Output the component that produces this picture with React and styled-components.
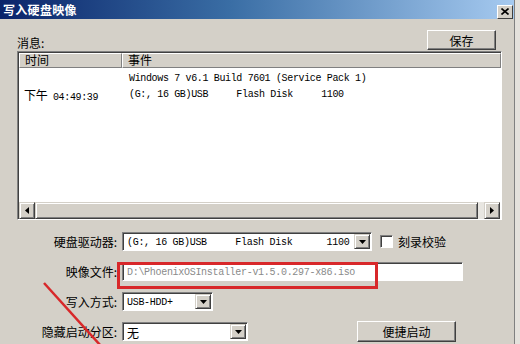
import styled, { createGlobalStyle } from "styled-components";

const GlobalStyle = createGlobalStyle`
  html, body { margin: 0; padding: 0; background: #e4e1dc; }
  body {
    width: 520px;
    height: 344px;
    overflow: hidden;
    font-family: "Noto Sans CJK SC", "DejaVu Sans", sans-serif;
    font-size: 12px;
    color: #000;
  }
`;

const mono = `"Liberation Mono", "Noto Sans CJK SC", monospace`;

const Window = styled.div`
  position: relative;
  width: 515px;
  height: 344px;
  background: #d4d0c8;
  border-right: 1px solid #808080;
  box-sizing: border-box;
  overflow: hidden;
`;

const TitleBar = styled.div`
  height: 19px;
  display: flex;
  align-items: center;
  justify-content: space-between;
  padding: 0 1px 0 3px;
  background: linear-gradient(90deg, #0a246a 0%, #3a6ea5 45%, #a6caf0 100%);
  color: #fff;
  font-weight: bold;
  font-size: 12px;
  letter-spacing: 0.3px;
`;

const CloseBtn = styled.div`
  width: 14px;
  height: 12px;
  background: #d4d0c8;
  border: 1px solid;
  border-color: #fff #404040 #404040 #fff;
  display: flex;
  align-items: center;
  justify-content: center;
  margin-top: 4px;
`;

const Body = styled.div`
  padding: 10px 12px 0 17px;
`;

const TopRow = styled.div`
  display: flex;
  justify-content: space-between;
  align-items: flex-end;
  padding-right: 6px;
  height: 21px;
`;

const Label = styled.span`
  font-size: 12px;
  line-height: 14px;
`;

const Button = styled.div`
  width: ${(p) => p.$w}px;
  height: ${(p) => p.$h || 20}px;
  box-sizing: border-box;
  border: 1px solid;
  border-color: #fff #404040 #404040 #fff;
  box-shadow: inset -1px -1px #808080;
  display: flex;
  align-items: center;
  justify-content: center;
  font-size: 12px;
  margin-left: ${(p) => p.$ml || 0}px;
`;

const ListBox = styled.div`
  margin-top: 1px;
  width: 485px;
  height: 169px;
  box-sizing: border-box;
  border: 1px solid;
  border-color: #808080 #fff #fff #808080;
  box-shadow: inset 1px 1px #404040;
  background: #fff;
  display: flex;
  flex-direction: column;
  padding: 1px 0 0 1px;
`;

const HeaderRow = styled.div`
  display: flex;
  height: 15px;
`;

const HeaderCell = styled.div`
  width: ${(p) => (p.$w ? `${p.$w}px` : "auto")};
  flex: ${(p) => (p.$w ? "none" : 1)};
  box-sizing: border-box;
  background: #d4d0c8;
  border: 1px solid;
  border-color: #fff #808080 #808080 #fff;
  padding-left: 5px;
  font-size: 12px;
  line-height: 12px;
`;

const Rows = styled.div`
  flex: 1;
  padding-top: 2px;
`;

const Row = styled.div`
  display: flex;
  height: 16px;
  align-items: center;
  font-family: ${mono};
  font-size: 10px;
  letter-spacing: -0.35px;
  white-space: pre;
`;

const TimeCell = styled.div`
  width: 104px;
  padding-left: 5px;
  box-sizing: border-box;
  font-family: ${mono};
  span { font-family: "Noto Sans CJK SC", sans-serif; font-size: 12px; }
`;

const EventCell = styled.div`
  padding-left: 6px;
`;

const HScroll = styled.div`
  height: 17px;
  display: flex;
  background: #e8e6e1;
  margin-right: 1px;
`;

const ScrollBtn = styled.div`
  width: 16px;
  height: 17px;
  box-sizing: border-box;
  background: #d4d0c8;
  border: 1px solid;
  border-color: #d4d0c8 #404040 #404040 #d4d0c8;
  box-shadow: inset 1px 1px #fff, inset -1px -1px #808080;
  display: flex;
  align-items: center;
  justify-content: center;
`;

const Thumb = styled.div`
  flex: 1;
  margin-right: 6px;
  box-sizing: border-box;
  background: #d4d0c8;
  border: 1px solid;
  border-color: #d4d0c8 #404040 #404040 #d4d0c8;
  box-shadow: inset 1px 1px #fff, inset -1px -1px #808080;
`;

const Form = styled.div`
  display: grid;
  grid-template-columns: 100px auto;
  column-gap: 5px;
  row-gap: 11px;
  margin-top: 12px;
  align-items: center;
`;

const FieldLabel = styled.div`
  text-align: right;
  font-size: 12px;
  line-height: 19px;
`;

const FieldRow = styled.div`
  display: flex;
  align-items: center;
  height: 19px;
`;

const Sunken = styled.div`
  width: ${(p) => p.$w}px;
  height: 19px;
  box-sizing: border-box;
  border: 1px solid;
  border-color: #808080 #fff #fff #808080;
  box-shadow: inset 1px 1px #404040;
  background: #fff;
  display: flex;
  align-items: center;
  padding: 1px 1px 0 4px;
  font-family: ${mono};
  font-size: 10px;
  letter-spacing: -0.3px;
  color: ${(p) => (p.$dim ? "#8a8a8a" : "#000")};
  white-space: pre;
`;

const SelectText = styled.div`
  flex: 1;
  overflow: hidden;
  font-family: ${(p) => (p.$cjk ? `"Noto Sans CJK SC", sans-serif` : mono)};
  font-size: ${(p) => (p.$cjk ? 12 : 10)}px;
`;

const DropBtn = styled.div`
  width: 16px;
  height: 15px;
  box-sizing: border-box;
  background: #d4d0c8;
  border: 1px solid;
  border-color: #d4d0c8 #404040 #404040 #d4d0c8;
  box-shadow: inset 1px 1px #fff, inset -1px -1px #808080;
  display: flex;
  align-items: center;
  justify-content: center;
  margin-top: -1px;
`;

const Check = styled.div`
  width: 13px;
  height: 13px;
  box-sizing: border-box;
  border: 1px solid;
  border-color: #808080 #fff #fff #808080;
  box-shadow: inset 1px 1px #404040;
  background: #fff;
  margin: 0 5px 0 8px;
`;

const Highlight = styled.div`
  position: absolute;
  left: 117px;
  top: 262px;
  width: 261px;
  height: 27px;
  box-sizing: border-box;
  border: 3px solid #d8282a;
  pointer-events: none;
`;

const Slash = styled.svg`
  position: absolute;
  left: 0;
  top: 0;
  pointer-events: none;
`;

function Arrow({ dir }) {
  const pts = dir === "down" ? "0,0 7,0 3.5,4" : dir === "left" ? "4,0 4,7 0,3.5" : "0,0 0,7 4,3.5";
  const [w, h] = dir === "down" ? [7, 4] : [4, 7];
  return (
    <svg width={w} height={h} viewBox={`0 0 ${w} ${h}`}>
      <polygon points={pts} fill="#000" />
    </svg>
  );
}

function Select({ w, children, cjk }) {
  return (
    <Sunken $w={w}>
      <SelectText $cjk={cjk}>{children}</SelectText>
      <DropBtn>
        <Arrow dir="down" />
      </DropBtn>
    </Sunken>
  );
}

export default function App() {
  return (
    <>
      <GlobalStyle />
      <Window>
        <TitleBar>
          <span>写入硬盘映像</span>
          <CloseBtn>
            <svg width="8" height="7" viewBox="0 0 8 7">
              <path d="M0.5 0.5 L7.5 6.5 M7.5 0.5 L0.5 6.5" stroke="#000" strokeWidth="1.6" />
            </svg>
          </CloseBtn>
        </TitleBar>
        <Body>
          <TopRow>
            <Label>消息:</Label>
            <Button $w={69}>保存</Button>
          </TopRow>
          <ListBox>
            <HeaderRow>
              <HeaderCell $w={103}>时间</HeaderCell>
              <HeaderCell>事件</HeaderCell>
            </HeaderRow>
            <Rows>
              <Row>
                <TimeCell />
                <EventCell>Windows 7 v6.1 Build 7601 (Service Pack 1)</EventCell>
              </Row>
              <Row>
                <TimeCell>
                  <span>下午</span> 04:49:39
                </TimeCell>
                <EventCell>(G:, 16 GB)USB     Flash Disk     1100</EventCell>
              </Row>
            </Rows>
            <HScroll>
              <ScrollBtn>
                <Arrow dir="left" />
              </ScrollBtn>
              <Thumb />
              <ScrollBtn>
                <Arrow dir="right" />
              </ScrollBtn>
            </HScroll>
          </ListBox>
          <Form>
            <FieldLabel>硬盘驱动器:</FieldLabel>
            <FieldRow>
              <Select w={250}>(G:, 16 GB)USB     Flash Disk      1100</Select>
              <Check />
              <Label>刻录校验</Label>
            </FieldRow>
            <FieldLabel>映像文件:</FieldLabel>
            <FieldRow>
              <Sunken $w={341} $dim>D:\PhoenixOSInstaller-v1.5.0.297-x86.iso</Sunken>
            </FieldRow>
            <FieldLabel>写入方式:</FieldLabel>
            <FieldRow>
              <Select w={91}>USB-HDD+</Select>
            </FieldRow>
            <FieldLabel>隐藏启动分区:</FieldLabel>
            <FieldRow>
              <Select w={126} cjk>
                无
              </Select>
              <Button $w={99} $h={21} $ml={109}>
                便捷启动
              </Button>
            </FieldRow>
          </Form>
        </Body>
        <Highlight />
        <Slash width="520" height="344">
          <line x1="44" y1="283" x2="101" y2="346" stroke="#d8282a" strokeWidth="2.5" />
        </Slash>
      </Window>
    </>
  );
}
